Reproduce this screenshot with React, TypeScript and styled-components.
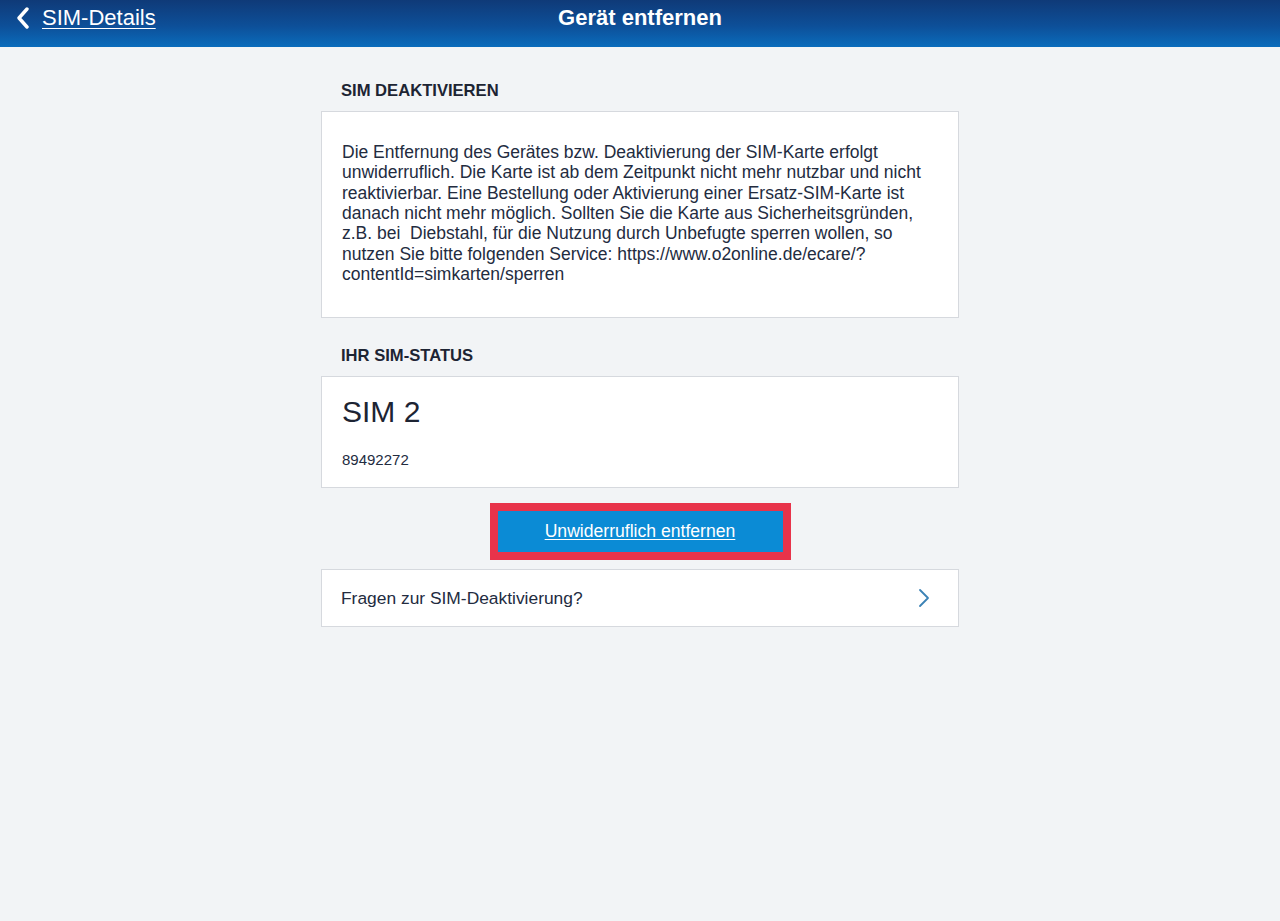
import styled, { createGlobalStyle } from "styled-components";

const GlobalStyle = createGlobalStyle`
  html, body {
    margin: 0;
    padding: 0;
    background: #f2f4f6;
    font-family: "Liberation Sans", Arial, sans-serif;
    color: #232b3a;
  }
`;

const Page = styled.div`
  min-height: 921px;
  background: #f2f4f6;
`;

const NavBar = styled.header`
  height: 47px;
  display: grid;
  grid-template-columns: 1fr auto 1fr;
  align-items: center;
  padding: 0 16px;
  background: linear-gradient(180deg, #0f3a78 0%, #0d4f98 55%, #0a6cbc 100%);
  color: #fff;
  box-sizing: border-box;
`;

const BackLink = styled.a`
  display: flex;
  align-items: center;
  gap: 12px;
  color: #fff;
  font-size: 22px;
  text-decoration: underline;
  text-underline-offset: 3px;
  text-decoration-thickness: 1px;
  margin-top: -12px;
`;

const NavTitle = styled.h1`
  margin: -12px 0 0;
  font-size: 22px;
  font-weight: 700;
`;

const Content = styled.main`
  width: 638px;
  margin: 0 auto;
  padding-top: 35px;
  display: flex;
  flex-direction: column;
`;

const SectionTitle = styled.h2<{ $gap?: number }>`
  margin: ${({ $gap }) => $gap ?? 0}px 0 11px 20px;
  font-size: 16.6px;
  font-weight: 700;
  color: #1d2433;
  line-height: 18px;
`;

const Card = styled.section<{ $pad: string }>`
  background: #fff;
  border: 1px solid #d6d9de;
  padding: ${({ $pad }) => $pad};
  box-sizing: border-box;
`;

const BodyText = styled.p`
  margin: 0;
  font-size: 17.5px;
  line-height: 20.35px;
  color: #232c3f;
`;

const SimName = styled.div`
  font-size: 30px;
  line-height: 34px;
  color: #1d2433;
`;

const SimNumber = styled.div`
  margin-top: 22px;
  font-size: 15px;
  line-height: 17px;
  color: #232c3f;
`;

const ButtonFrame = styled.div`
  align-self: center;
  margin: 15px 0 9px;
  border: 8px solid #e8334a;
  display: flex;
`;

const PrimaryButton = styled.button`
  width: 285px;
  height: 41px;
  border: none;
  background: #0b8bd5;
  color: #fff;
  font-family: inherit;
  font-size: 17.6px;
  text-decoration: underline;
  text-underline-offset: 2px;
  cursor: pointer;
`;

const LinkRow = styled.a`
  display: flex;
  align-items: center;
  justify-content: space-between;
  height: 58px;
  padding: 0 28px 0 19px;
  background: #fff;
  border: 1px solid #d6d9de;
  box-sizing: border-box;
  font-size: 17.4px;
  color: #232c3f;
  text-decoration: none;
`;

export default function App() {
  return (
    <Page>
      <GlobalStyle />
      <NavBar>
        <BackLink>
          <svg width="14" height="22" viewBox="0 0 14 22">
            <path d="M11 2 L3 11 L11 20" fill="none" stroke="#fff" strokeWidth="3.4" strokeLinecap="round" strokeLinejoin="round" />
          </svg>
          SIM-Details
        </BackLink>
        <NavTitle>Gerät entfernen</NavTitle>
        <div />
      </NavBar>
      <Content>
        <SectionTitle>SIM DEAKTIVIEREN</SectionTitle>
        <Card $pad="30px 20px 33px">
          <BodyText>
            Die Entfernung des Gerätes bzw. Deaktivierung der SIM-Karte erfolgt<br />
            unwiderruflich. Die Karte ist ab dem Zeitpunkt nicht mehr nutzbar und nicht<br />
            reaktivierbar. Eine Bestellung oder Aktivierung einer Ersatz-SIM-Karte ist<br />
            danach nicht mehr möglich. Sollten Sie die Karte aus Sicherheitsgründen,<br />
            z.B. bei&nbsp; Diebstahl, für die Nutzung durch Unbefugte sperren wollen, so<br />
            nutzen Sie bitte folgenden Service: https://www.o2online.de/ecare/?<br />
            contentId=simkarten/sperren
          </BodyText>
        </Card>
        <SectionTitle $gap={29}>IHR SIM-STATUS</SectionTitle>
        <Card $pad="18px 20px 19px">
          <SimName>SIM 2</SimName>
          <SimNumber>89492272</SimNumber>
        </Card>
        <ButtonFrame>
          <PrimaryButton>Unwiderruflich entfernen</PrimaryButton>
        </ButtonFrame>
        <LinkRow>
          Fragen zur SIM-Deaktivierung?
          <svg width="12" height="20" viewBox="0 0 12 20">
            <path d="M2 2 L10 10 L2 18" fill="none" stroke="#3b82b5" strokeWidth="1.8" strokeLinecap="round" strokeLinejoin="round" />
          </svg>
        </LinkRow>
      </Content>
    </Page>
  );
}
